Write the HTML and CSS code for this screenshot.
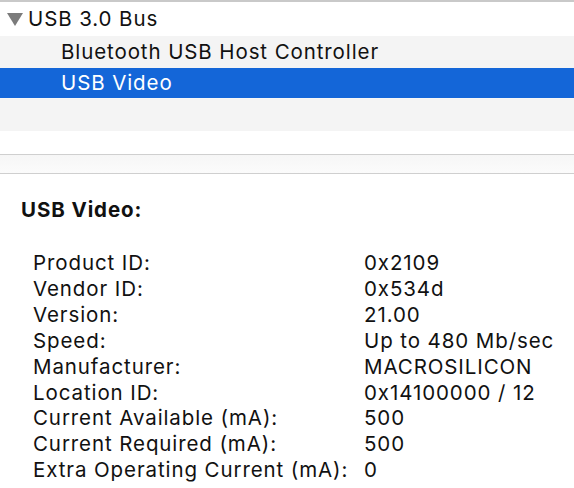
FILE: index.html
```html
<!DOCTYPE html>
<html>
<head>
<meta charset="utf-8">
<link rel="stylesheet" href="styles.css">
</head>
<body>
<div class="tree">
  <div class="row white first"><span class="disclosure"><svg width="18" height="16" viewBox="0 0 18 16"><path d="M1 2 H17 L9 15 Z" fill="#7b7b7b"/></svg></span><span class="label">USB 3.0 Bus</span></div>
  <div class="row gray child"><span class="label">Bluetooth USB Host Controller</span></div>
  <div class="row selected child"><span class="label">USB Video</span></div>
  <div class="row gray"></div>
  <div class="row white short"></div>
</div>
<div class="splitter"></div>
<div class="details">
  <div class="title">USB Video:</div>
  <div class="props">
    <div class="k">Product ID:</div><div class="v">0x2109</div>
    <div class="k">Vendor ID:</div><div class="v">0x534d</div>
    <div class="k">Version:</div><div class="v">21.00</div>
    <div class="k">Speed:</div><div class="v">Up to 480 Mb/sec</div>
    <div class="k">Manufacturer:</div><div class="v">MACROSILICON</div>
    <div class="k">Location ID:</div><div class="v">0x14100000 / 12</div>
    <div class="k">Current Available (mA):</div><div class="v">500</div>
    <div class="k">Current Required (mA):</div><div class="v">500</div>
    <div class="k">Extra Operating Current (mA):</div><div class="v">0</div>
  </div>
</div>
</body>
</html>
```

FILE: styles.css
```css
html, body {
  margin: 0;
  padding: 0;
  background: #ffffff;
}
body {
  font-family: Inter, "Liberation Sans", sans-serif;
  font-size: 20.5px;
  letter-spacing: 0.9px;
  color: #111111;
  width: 574px;
  height: 488px;
  overflow: hidden;
}
.tree {
  border-top: 2px solid #c9c9c9;
}
.row {
  height: 32px;
  display: flex;
  align-items: center;
  line-height: 32px;
  white-space: nowrap;
}
.row.white { background: #ffffff; }
.row.gray { background: #f4f4f4; }
.row.selected {
  background: #1466d8;
  color: #ffffff;
  height: 30px;
  border-bottom: 1px solid #f7f7f7;
}
.row.first { height: 34px; }
.row.short { height: 23px; }
.disclosure {
  width: 26px;
  display: flex;
  justify-content: center;
  padding-left: 2px;
}
.child .label { padding-left: 61px; }
.splitter {
  height: 18px;
  border-top: 1px solid #cfcfcf;
  border-bottom: 1px solid #cfcfcf;
  background: linear-gradient(#f6f6f6, #fbfbfb);
}
.details {
  padding: 23px 0 0 21px;
}
.title {
  font-weight: 700;
  line-height: 26px;
  height: 26px;
}
.props {
  margin-top: 27px;
  margin-left: 12px;
  display: grid;
  grid-template-columns: 331px auto;
  line-height: 25.9px;
}
```
